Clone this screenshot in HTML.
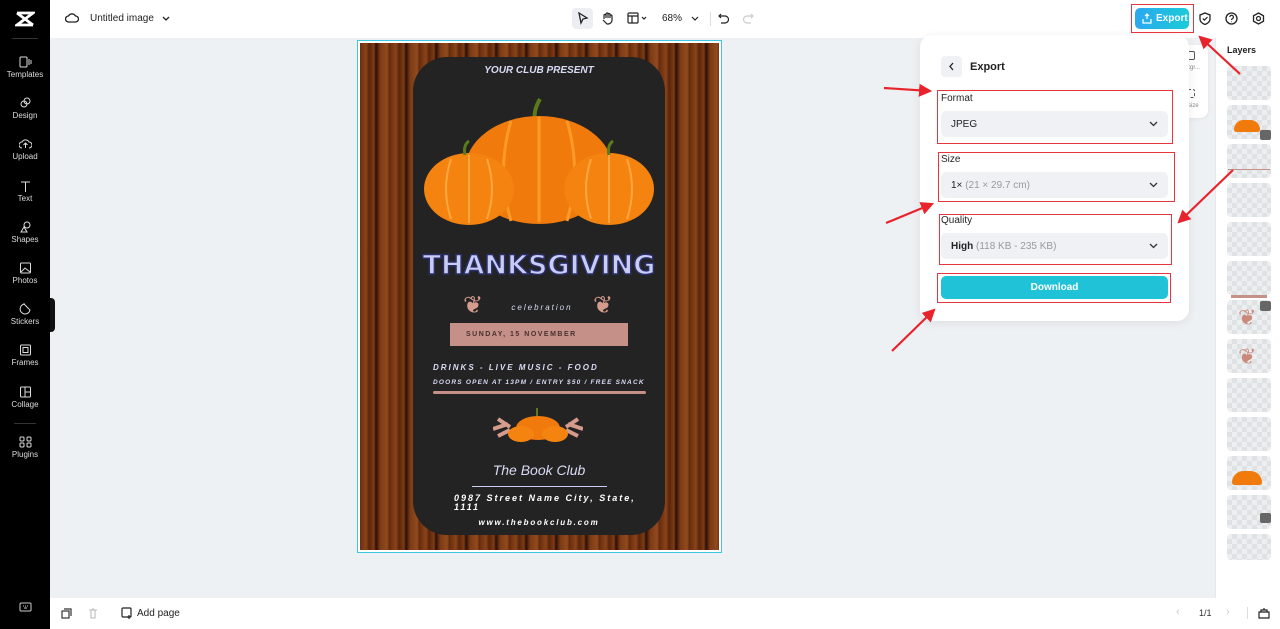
<!DOCTYPE html>
<html><head><meta charset="utf-8"><style>
*{box-sizing:border-box;margin:0;padding:0}
body{width:1280px;height:629px;overflow:hidden;font-family:"Liberation Sans",sans-serif;background:#eef1f4;position:relative}
.abs{position:absolute}
.side{left:0;top:0;width:50px;height:629px;background:#000}
.si{position:absolute;left:0;width:50px;text-align:center;color:#ddd;font-size:8px}
.si svg{display:block;margin:0 auto 2px}
.top{left:50px;top:0;width:1230px;height:38px;background:#fff}
.bot{left:50px;top:598px;width:1165px;height:31px;background:#fff}
.layers{left:1215px;top:38px;width:65px;height:560px;background:#fff;border-left:1px solid #e6e8eb}
.th{position:absolute;left:11px;width:44px;height:34px;border-radius:4px;background-color:#eceef0;background-image:linear-gradient(45deg,#dfe2e5 25%,transparent 25%,transparent 75%,#dfe2e5 75%),linear-gradient(45deg,#dfe2e5 25%,transparent 25%,transparent 75%,#dfe2e5 75%);background-size:10px 10px;background-position:0 0,5px 5px}
.panel{left:920px;top:35px;width:269px;height:286px;background:#fff;border-radius:12px;box-shadow:0 2px 10px rgba(0,0,0,.08)}
.lbl{position:absolute;left:21px;font-size:10px;color:#222}
.sel{position:absolute;left:21px;width:227px;height:26px;background:#eff1f4;border-radius:5px;font-size:10px;color:#222;padding:8px 10px}
.sel i{font-style:normal;color:#999}
.sel svg{position:absolute;right:10px;top:10px}
.red{position:absolute;border:1px solid #e8343c}
.card{left:413px;top:57px;width:252px;height:478px;background:#232323;border-radius:34px}
.ct{position:absolute;left:0;width:252px;text-align:center;color:#d8dbf5;font-weight:bold;font-style:italic}
</style></head><body>
<div class="abs side">
 <svg class="abs" style="left:15px;top:11px" width="20" height="16" viewBox="0 0 20 16"><path d="M2 2h16L2 14h16M2 2l16 12" stroke="#fff" stroke-width="2.8" fill="none"/></svg>
 <div class="abs" style="left:12px;top:38px;width:26px;height:1px;background:#333"></div>
 <div class="si" style="top:56px"><svg width="13" height="12"><rect x="1" y="1" width="7" height="10" rx="1" stroke="#ddd" fill="none"/><path d="M10 3v6M12 4v4" stroke="#ddd"/></svg>Templates</div>
 <div class="si" style="top:97px"><svg width="13" height="12"><circle cx="5" cy="7" r="3" stroke="#ddd" fill="none"/><circle cx="8" cy="4" r="3" stroke="#ddd" fill="none"/></svg>Design</div>
 <div class="si" style="top:138px"><svg width="13" height="12"><path d="M3 10a3 3 0 010-6 4 4 0 017 0 3 3 0 010 6M6.5 10V5M4.5 7l2-2 2 2" stroke="#ddd" fill="none"/></svg>Upload</div>
 <div class="si" style="top:180px"><svg width="13" height="12"><path d="M2 2h9M6.5 2v10" stroke="#ddd" fill="none"/></svg>Text</div>
 <div class="si" style="top:221px"><svg width="13" height="12"><circle cx="8" cy="4" r="3" stroke="#ddd" fill="none"/><path d="M2 11l3-5 3 5z" stroke="#ddd" fill="none"/></svg>Shapes</div>
 <div class="si" style="top:262px"><svg width="13" height="12"><rect x="1.5" y="1" width="10" height="10" rx="1" stroke="#ddd" fill="none"/><path d="M2 10l4-4 5 4" stroke="#ddd" fill="none"/></svg>Photos</div>
 <div class="si" style="top:303px"><svg width="13" height="12"><path d="M6 1a5 5 0 105 6L5 1z" stroke="#ddd" fill="none"/></svg>Stickers</div>
 <div class="si" style="top:344px"><svg width="13" height="12"><rect x="1.5" y="1" width="10" height="10" rx="1" stroke="#ddd" fill="none"/><rect x="4" y="3.5" width="5" height="5" stroke="#ddd" fill="none"/></svg>Frames</div>
 <div class="si" style="top:386px"><svg width="13" height="12"><rect x="1.5" y="1" width="10" height="10" rx="1" stroke="#ddd" fill="none"/><path d="M6 1v10M6 6h5" stroke="#ddd"/></svg>Collage</div>
 <div class="abs" style="left:14px;top:423px;width:22px;height:1px;background:#333"></div>
 <div class="si" style="top:436px"><svg width="13" height="12"><rect x="1" y="1" width="4" height="4" rx="1" stroke="#ddd" fill="none"/><rect x="8" y="1" width="4" height="4" rx="1" stroke="#ddd" fill="none"/><rect x="1" y="7" width="4" height="4" rx="1" stroke="#ddd" fill="none"/><rect x="8" y="7" width="4" height="4" rx="1" stroke="#ddd" fill="none"/></svg>Plugins</div>
 <svg class="abs" style="left:19px;top:602px" width="13" height="11"><rect x="1" y="1" width="11" height="8" rx="1" stroke="#ccc" fill="none"/><path d="M4 4h1M6 4h1M8 4h1M5 6h3" stroke="#ccc"/></svg>
</div>
<div class="abs" style="left:50px;top:298px;width:5px;height:34px;background:#111;border-radius:0 4px 4px 0"></div>
<div class="abs top">
 <svg class="abs" style="left:15px;top:12px" width="14" height="12"><path d="M3.5 10a3 3 0 010-6 4 4 0 017 0 3 3 0 010 6z" stroke="#222" stroke-width="1.3" fill="none"/></svg>
 <div class="abs" style="left:40px;top:13px;font-size:10px;color:#222">Untitled image</div>
 <svg class="abs" style="left:112px;top:16px" width="8" height="6"><path d="M1 1l3 3 3-3" stroke="#222" stroke-width="1.3" fill="none"/></svg>
 <div class="abs" style="left:522px;top:8px;width:21px;height:21px;background:#eceef1;border-radius:4px"></div>
 <svg class="abs" style="left:527px;top:12px" width="12" height="13"><path d="M2 1l8 5-4 1-2 4z" stroke="#222" stroke-width="1.3" fill="none"/></svg>
 <svg class="abs" style="left:551px;top:11px" width="12" height="14"><path d="M3 8V4.5a1 1 0 012 0V7V3a1 1 0 012 0v4V3.5a1 1 0 012 0V7V5a1 1 0 012 0v4a4 4 0 01-4 4H6L2 9" stroke="#222" stroke-width="1.2" fill="none"/></svg>
 <svg class="abs" style="left:577px;top:12px" width="22" height="12"><rect x="1" y="1" width="10" height="10" rx="1" stroke="#222" stroke-width="1.2" fill="none"/><path d="M1 4h10M5 4v7M15 5l2 2 2-2" stroke="#222" stroke-width="1.2" fill="none"/></svg>
 <div class="abs" style="left:612px;top:13px;font-size:10px;color:#222">68%</div>
 <svg class="abs" style="left:641px;top:16px" width="8" height="6"><path d="M1 1l3 3 3-3" stroke="#222" stroke-width="1.2" fill="none"/></svg>
 <div class="abs" style="left:660px;top:12px;width:1px;height:14px;background:#ddd"></div>
 <svg class="abs" style="left:668px;top:12px" width="12" height="12"><path d="M3 2L1 4l2 2M1 4h6a3.5 3.5 0 010 7H3" stroke="#222" stroke-width="1.2" fill="none"/></svg>
 <svg class="abs" style="left:692px;top:12px" width="12" height="12"><path d="M9 2l2 2-2 2M11 4H5a3.5 3.5 0 000 7h4" stroke="#ccc" stroke-width="1.2" fill="none"/></svg>
 <div class="abs" style="left:1085px;top:8px;width:54px;height:21px;border-radius:5px;background:linear-gradient(90deg,#2ba8ef,#1ccbd8);color:#fff;font-size:10px;font-weight:bold;padding:5px 0 0 21px">Export</div>
 <svg class="abs" style="left:1092px;top:13px" width="10" height="11"><path d="M5 1v5M3 3l2-2 2 2M1 6v4h8V6" stroke="#fff" stroke-width="1.2" fill="none"/></svg>
 <svg class="abs" style="left:1149px;top:12px" width="12" height="13"><path d="M6 1l5 2v4c0 3-2.5 4.5-5 5.5C3.5 11.5 1 10 1 7V3z" stroke="#222" stroke-width="1.3" fill="none"/><path d="M3.8 6.5l1.6 1.6L8.5 5" stroke="#222" stroke-width="1.2" fill="none"/></svg>
 <svg class="abs" style="left:1175px;top:12px" width="13" height="13"><circle cx="6.5" cy="6.5" r="5.5" stroke="#222" stroke-width="1.3" fill="none"/><path d="M4.8 5a1.8 1.8 0 113 1.4c-.8.5-1.3.8-1.3 1.6M6.5 9.5v.6" stroke="#222" stroke-width="1.2" fill="none"/></svg>
 <svg class="abs" style="left:1202px;top:12px" width="13" height="13"><path d="M6.5 1l5 2.8v5.4l-5 2.8-5-2.8V3.8z" stroke="#222" stroke-width="1.3" fill="none"/><circle cx="6.5" cy="6.5" r="2" stroke="#222" stroke-width="1.2" fill="none"/></svg>
</div>
<!-- canvas -->
<div class="abs" style="left:357px;top:40px;width:365px;height:513px;border:1.5px solid #3cc8de;background:#fff"></div>
<div class="abs" style="left:360px;top:43px;width:359px;height:507px;background:repeating-linear-gradient(90deg,#6a2e10 0,#8a4418 6px,#5a250c 9px,#7d3c15 14px,#2a0e05 16px,#7a3a14 20px,#934a1c 27px,#5a260c 30px)"></div>
<div class="abs card">
 <div class="ct" style="top:8px;font-size:10px">YOUR CLUB PRESENT</div>
 <svg class="abs" style="left:0;top:28px" width="252" height="150">
  <path d="M122 36q-2-10 5-22" stroke="#5b7a1a" stroke-width="4" fill="none"/>
  <ellipse cx="126" cy="85" rx="74" ry="54" fill="#f07a0c"/>
  <path d="M126 32v105M98 36q-15 50 0 100M154 36q15 50 0 100" stroke="#ff9a2a" stroke-width="3" fill="none"/>
  <ellipse cx="56" cy="104" rx="45" ry="36" fill="#f5830f"/>
  <ellipse cx="196" cy="104" rx="45" ry="36" fill="#f5830f"/>
  <path d="M56 70v68M38 74q-10 30 0 60M74 74q10 30 0 60M178 74q-10 30 0 60M196 70v68M214 74q10 30 0 60" stroke="#ffa640" stroke-width="2" fill="none"/>
  <path d="M52 70q-2-10 4-14M196 70q-2-10 4-14" stroke="#5b7a1a" stroke-width="3" fill="none"/>
 </svg>
 <div class="ct" style="top:193px;font-size:27px;font-style:normal;font-family:'DejaVu Sans',sans-serif;color:#c9cdf6;-webkit-text-stroke:1.5px #2a2f6a;letter-spacing:0">THANKSGIVING</div>
 <div class="abs" style="left:50px;top:234px;color:#d59b8c;font-size:24px">❦</div>
 <div class="abs" style="left:180px;top:234px;color:#d59b8c;font-size:24px">❦</div>
 <div class="ct" style="top:246px;font-size:8px;letter-spacing:2px;font-weight:normal;left:3px">celebration</div>
 <div class="abs" style="left:37px;top:266px;width:178px;height:23px;background:#c49088"></div>
 <div class="abs" style="left:53px;top:274px;font-size:7px;font-weight:bold;letter-spacing:1.5px;color:#4a3030">SUNDAY, 15 NOVEMBER</div>
 <div class="abs" style="left:20px;top:306px;font-size:8px;color:#d8dbf5;font-weight:bold;font-style:italic;letter-spacing:2px">DRINKS - LIVE MUSIC - FOOD</div>
 <div class="abs" style="left:20px;top:322px;font-size:6.5px;color:#d8dbf5;font-weight:bold;font-style:italic;letter-spacing:1.2px">DOORS OPEN AT 13PM / ENTRY $50 / FREE SNACK</div>
 <div class="abs" style="left:20px;top:334px;width:213px;height:3px;background:#c49088;border-radius:2px"></div>
 <svg class="abs" style="left:80px;top:347px" width="90" height="40"><path d="M0 25l15 -5M5 15l12 8M5 32l12-6" stroke="#d59b8c" stroke-width="4"/><path d="M90 25l-15-5M85 15l-12 8M85 32l-12-6" stroke="#d59b8c" stroke-width="4"/><ellipse cx="45" cy="24" rx="22" ry="12" fill="#f07a0c"/><ellipse cx="28" cy="30" rx="13" ry="8" fill="#f5830f"/><ellipse cx="62" cy="30" rx="13" ry="8" fill="#f5830f"/><path d="M44 12v-8" stroke="#5b7a1a" stroke-width="2"/></svg>
 <div class="ct" style="top:405px;font-size:14px;font-weight:normal">The Book Club</div>
 <div class="abs" style="left:59px;top:429px;width:135px;height:1px;background:#c9cdf6"></div>
 <div class="abs" style="left:41px;top:437px;font-size:9px;color:#fff;font-weight:bold;font-style:italic;letter-spacing:2px;line-height:9px;width:200px">0987 Street Name City, State,<br>1111</div>
 <div class="ct" style="top:461px;font-size:8px;color:#fff;letter-spacing:1.8px">www.thebookclub.com</div>
</div>
<!-- layers -->
<div class="abs layers">
 <div class="abs" style="left:11px;top:7px;font-size:9px;font-weight:bold;color:#222">Layers</div>
 <div class="th" style="top:28px"></div><div class="th" style="top:67px"></div><div class="th" style="top:106px"></div>
 <div class="th" style="top:145px"></div><div class="th" style="top:184px"></div><div class="th" style="top:223px"></div>
 <div class="th" style="top:262px"></div><div class="th" style="top:301px"></div><div class="th" style="top:340px"></div>
 <div class="th" style="top:379px"></div><div class="th" style="top:418px"></div><div class="th" style="top:457px"></div>
 <div class="th" style="top:496px;height:26px"></div>
 <div class="abs" style="left:18px;top:82px;width:26px;height:12px;border-radius:12px 12px 3px 3px;background:#f07a0c"></div>
 <div class="abs" style="left:12px;top:131px;width:42px;height:1px;background:#c49088"></div>
 <div class="abs" style="left:15px;top:257px;width:36px;height:3px;background:#c49088"></div>
 <div class="abs" style="left:22px;top:267px;color:#c98a7c;font-size:22px">❦</div>
 <div class="abs" style="left:22px;top:306px;color:#c98a7c;font-size:22px">❦</div>
 <div class="abs" style="left:16px;top:433px;width:30px;height:14px;border-radius:14px 14px 3px 3px;background:#f07a0c"></div>
 <div class="abs" style="left:44px;top:92px;width:11px;height:10px;background:#666;border-radius:2px"></div>
 <div class="abs" style="left:44px;top:263px;width:11px;height:10px;background:#666;border-radius:2px"></div>
 <div class="abs" style="left:44px;top:475px;width:11px;height:10px;background:#666;border-radius:2px"></div>
</div>
<!-- small panel behind -->
<div class="abs" style="left:1150px;top:45px;width:58px;height:73px;background:#fff;border-radius:8px;box-shadow:0 1px 4px rgba(0,0,0,.06)">
 <div class="abs" style="left:36px;top:6px;width:9px;height:9px;border:1.3px solid #555;border-radius:2px"></div>
 <div class="abs" style="left:37px;top:20px;font-size:6px;color:#888">kgr...</div>
 <div class="abs" style="left:36px;top:44px;width:9px;height:9px;border:1.3px dashed #555;border-radius:2px"></div>
 <div class="abs" style="left:38px;top:58px;font-size:6px;color:#888">size</div>
</div>
<!-- export panel -->
<div class="abs panel">
 <div class="abs" style="left:21px;top:21px;width:21px;height:21px;background:#eff1f4;border-radius:4px"></div>
 <svg class="abs" style="left:28px;top:27px" width="7" height="9"><path d="M5 1L2 4.5 5 8" stroke="#222" stroke-width="1.3" fill="none"/></svg>
 <div class="abs" style="left:50px;top:26px;font-size:11px;font-weight:bold;color:#222">Export</div>
 <div class="lbl" style="top:58px">Format</div>
 <div class="sel" style="top:76px">JPEG<svg width="9" height="6"><path d="M1 1l3.5 3.5L8 1" stroke="#333" stroke-width="1.3" fill="none"/></svg></div>
 <div class="lbl" style="top:119px">Size</div>
 <div class="sel" style="top:137px">1× <i>(21 × 29.7 cm)</i><svg width="9" height="6"><path d="M1 1l3.5 3.5L8 1" stroke="#333" stroke-width="1.3" fill="none"/></svg></div>
 <div class="lbl" style="top:180px">Quality</div>
 <div class="sel" style="top:198px"><b>High</b> <i>(118 KB - 235 KB)</i><svg width="9" height="6"><path d="M1 1l3.5 3.5L8 1" stroke="#333" stroke-width="1.3" fill="none"/></svg></div>
 <div class="abs" style="left:21px;top:241px;width:227px;height:23px;background:#1fc2d7;border-radius:5px;color:#fff;font-size:10px;font-weight:bold;text-align:center;padding-top:6px">Download</div>
</div>
<!-- red boxes -->
<div class="red" style="left:1131px;top:4px;width:63px;height:29px"></div>
<div class="red" style="left:937px;top:90px;width:236px;height:54px"></div>
<div class="red" style="left:938px;top:152px;width:237px;height:50px"></div>
<div class="red" style="left:939px;top:214px;width:233px;height:51px"></div>
<div class="red" style="left:937px;top:273px;width:234px;height:30px"></div>
<svg class="abs" style="left:0;top:0" width="1280" height="629">
 <defs><marker id="a" markerWidth="6" markerHeight="6" refX="5" refY="3" orient="auto"><path d="M0 0L6 3 0 6z" fill="#e8232b"/></marker></defs>
 <g stroke="#e8232b" stroke-width="2.2" marker-end="url(#a)">
  <line x1="1240" y1="74" x2="1200" y2="37"/>
  <line x1="884" y1="88" x2="930" y2="91"/>
  <line x1="886" y1="223" x2="932" y2="204"/>
  <line x1="1233" y1="170" x2="1179" y2="222"/>
  <line x1="892" y1="351" x2="934" y2="310"/>
 </g>
</svg>
<!-- bottom -->
<div class="abs bot">
 <svg class="abs" style="left:11px;top:10px" width="11" height="11"><rect x="1" y="3" width="7" height="7" stroke="#333" stroke-width="1.2" fill="none"/><path d="M3 1h7v7" stroke="#333" stroke-width="1.2" fill="none"/></svg>
 <svg class="abs" style="left:38px;top:10px" width="10" height="11"><path d="M1 2h8M3 2v8h4V2M4 1h2" stroke="#bbb" stroke-width="1.1" fill="none"/></svg>
 <svg class="abs" style="left:71px;top:9px" width="12" height="12"><rect x="1" y="1" width="9" height="9" rx="1" stroke="#222" stroke-width="1.2" fill="none"/><path d="M8 8v4M6 10h4" stroke="#222" stroke-width="1.2"/></svg>
 <div class="abs" style="left:87px;top:10px;font-size:10px;color:#222">Add page</div>
</div>
<div class="abs" style="left:1215px;top:598px;width:65px;height:31px;background:#fff"></div>
<div class="abs" style="left:1176px;top:606px;font-size:11px;color:#ccc">‹</div>
<div class="abs" style="left:1199px;top:608px;font-size:9px;color:#333">1/1</div>
<div class="abs" style="left:1226px;top:606px;font-size:11px;color:#ccc">›</div>
<div class="abs" style="left:1247px;top:607px;width:1px;height:12px;background:#ddd"></div>
<svg class="abs" style="left:1258px;top:607px" width="12" height="12"><path d="M1 5h10v6H1zM3 5V3h6v2M6 1v2" stroke="#222" stroke-width="1.2" fill="none"/></svg>
</body></html>
